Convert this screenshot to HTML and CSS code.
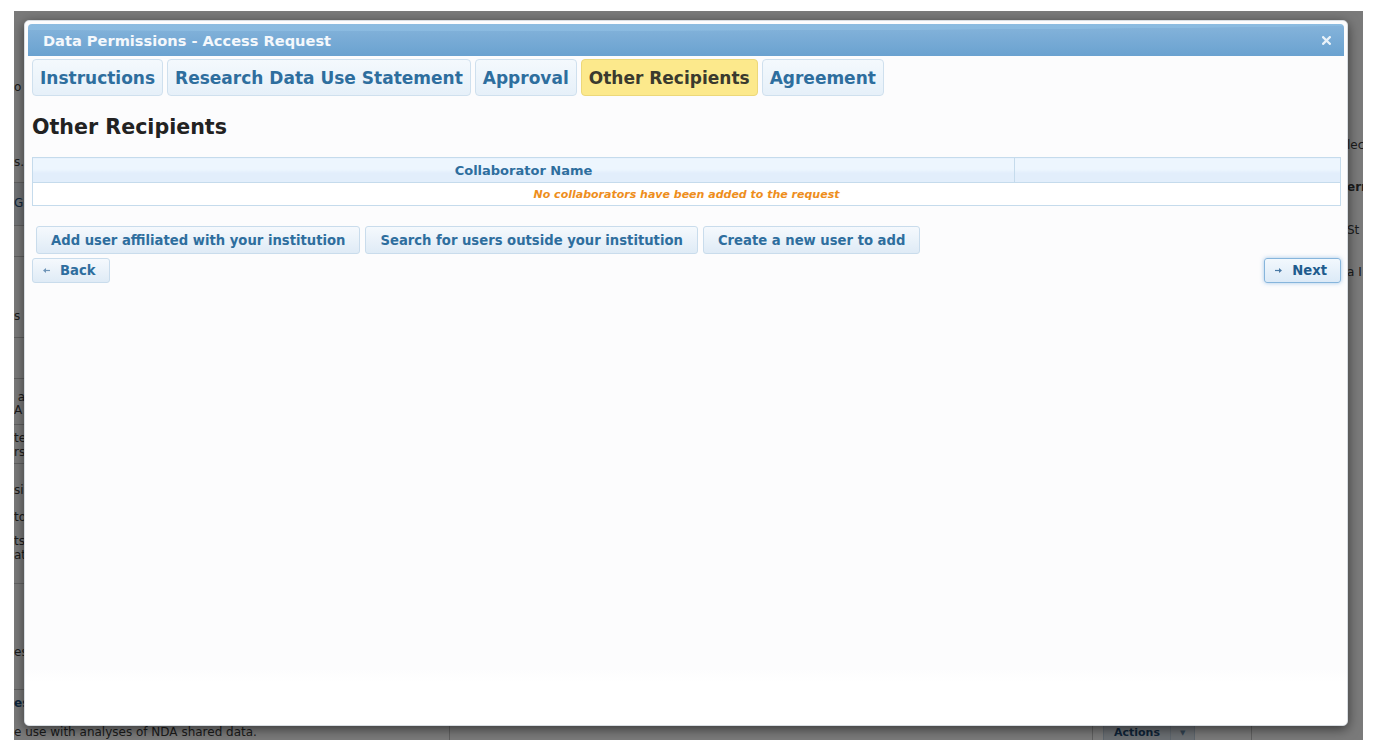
FILE: index.html
```html
<!DOCTYPE html>
<html lang="en">
<head>
<meta charset="utf-8">
<title>Data Permissions - Access Request</title>
<link rel="stylesheet" href="styles.css">
</head>
<body>
<div class="frame">
  <div class="page">
    <div class="page-main">
      <div class="side-left">
        <div class="lrow r1"><span>o</span></div>
        <div class="lrow r2"><span>s.</span></div>
        <div class="lrow r3"><span class="lnk">G</span></div>
        <div class="lrow r4"></div>
        <div class="lrow r5"><span>s</span></div>
        <div class="lrow r6"></div>
        <div class="lrow r7"><div>&nbsp;a</div><div>A</div></div>
        <div class="lrow r8"><div>te</div><div>rsl</div></div>
        <div class="lrow r9"><div class="g1">si</div><div class="g2">to</div><div class="g3">ts</div><div>at</div></div>
        <div class="lrow r10"><span>es</span></div>
        <div class="lrow r11"><span class="lnk strong">es</span></div>
      </div>
      <div class="page-mid"></div>
      <div class="side-right">
        <div class="rt1">lec</div>
        <div class="rt2 strong">ern</div>
        <div class="rt3">St</div>
        <div class="rt4">a I</div>
      </div>
    </div>
    <div class="page-foot">
      <div class="foot-l">e use with analyses of NDA shared data.</div>
      <div class="foot-m"></div>
      <div class="foot-a"><span class="actions"><span class="act-label">Actions</span><span class="act-caret">&#9660;</span></span></div>
      <div class="foot-r"></div>
    </div>
  </div>

  <div class="overlay"></div>

  <div class="dialog">
    <div class="titlebar">
      <span class="title">Data Permissions - Access Request</span>
      <span class="close" aria-label="close">
        <svg width="9" height="9" viewBox="0 0 9 9"><path d="M1.2 1.2 L7.8 7.8 M7.8 1.2 L1.2 7.8" stroke="#eaf2f9" stroke-width="2.3" stroke-linecap="square"/></svg>
      </span>
    </div>
    <div class="content">
      <div class="tabs">
        <span class="tab">Instructions</span>
        <span class="tab">Research Data Use Statement</span>
        <span class="tab">Approval</span>
        <span class="tab active">Other Recipients</span>
        <span class="tab">Agreement</span>
      </div>
      <h2 class="heading">Other Recipients</h2>
      <table class="grid">
        <thead>
          <tr><th class="c-name">Collaborator Name</th><th class="c-act"></th></tr>
        </thead>
        <tbody>
          <tr><td colspan="2" class="empty">No collaborators have been added to the request</td></tr>
        </tbody>
      </table>
      <div class="btnrow">
        <span class="btn">Add user affiliated with your institution</span>
        <span class="btn">Search for users outside your institution</span>
        <span class="btn">Create a new user to add</span>
      </div>
      <div class="navrow">
        <span class="btn nav">
          <svg class="arr" width="7" height="7" viewBox="0 0 7 7"><path d="M2.5 3.5 H7" stroke="#6f95b8" stroke-width="1.2"/><path d="M0 3.5 L3 1 L3 6 Z" fill="#6f95b8"/></svg>
          <span>Back</span>
        </span>
        <span class="btn nav focus">
          <svg class="arr" width="7" height="7" viewBox="0 0 7 7"><path d="M0 3.5 H4.5" stroke="#4a7aa6" stroke-width="1.2"/><path d="M7 3.5 L4 1 L4 6 Z" fill="#4a7aa6"/></svg>
          <span>Next</span>
        </span>
      </div>
    </div>
  </div>
</div>
</body>
</html>
```
FILE: styles.css
```css
html, body {
  margin: 0;
  padding: 0;
  background: #ffffff;
}

body {
  font-family: "DejaVu Sans", Verdana, sans-serif;
}

.frame {
  position: relative;
  margin: 11px 0 0 14px;
  width: 1349px;
  height: 729px;
  overflow: hidden;
}

/* ---------- page underneath the modal ---------- */
.page {
  width: 100%;
  height: 100%;
  background: #ffffff;
  display: flex;
  flex-direction: column;
  font-size: 12px;
  color: #3a3a3a;
}

.page-main {
  height: 713px;
  display: flex;
  flex: none;
}

.side-left {
  width: 435px;
  display: flex;
  flex-direction: column;
}

.lrow {
  box-sizing: border-box;
  border-bottom: 1px solid #c8c8c8;
  line-height: 14px;
  white-space: nowrap;
  overflow: hidden;
}

.r1 { height: 129px; padding-top: 69px; border-bottom-color: transparent; }
.r2 { height: 43px; padding-top: 15px; }
.r3 { height: 43px; padding-top: 13px; background: #eef2f6; }
.r4 { height: 31px; }
.r5 { height: 81px; padding-top: 52px; }
.r6 { height: 41px; }
.r7 { height: 46px; padding-top: 12px; line-height: 13px; }
.r8 { height: 39px; padding-top: 6px; }
.r9 { height: 120px; padding-top: 19px; border-bottom-color: #d0d0d0; }
.r9 .g1 { margin-bottom: 13px; }
.r9 .g2 { margin-bottom: 10px; }
.r10 { height: 106px; padding-top: 61px; }
.r11 { height: 34px; padding-top: 6px; border-bottom: 0; }

.lnk { color: #1f4f7c; }
.strong { font-weight: bold; }

.page-mid {
  flex: 1;
}

.side-right {
  width: 16px;
  flex: none;
  white-space: nowrap;
  line-height: 14px;
  padding-top: 127px;
  font-size: 12px;
}
.rt1 { margin-bottom: 28px; }
.rt2 { margin-bottom: 29px; }
.rt3 { margin-bottom: 28px; }

.page-foot {
  display: flex;
  height: 40px;
  flex: none;
  line-height: 14px;
}

.foot-l {
  width: 435px;
  white-space: nowrap;
  border-right: 1px solid #c8c8c8;
  padding-top: 1px;
}
.foot-m {
  width: 642px;
  border-right: 1px solid #c8c8c8;
}
.foot-a {
  width: 159px;
  border-right: 1px solid #c8c8c8;
  padding: 0 0 0 10px;
  box-sizing: border-box;
}
.foot-r { flex: 1; }

.actions {
  display: inline-flex;
  background: #dfe8f1;
  color: #1f4a74;
  font-weight: bold;
  font-size: 11px;
  line-height: 16px;
  border: 1px solid #c5d5e4;
}
.act-label { padding: 0 10px; border-right: 1px solid #c5d5e4; }
.act-caret { padding: 0 9px; font-size: 7px; color: #6a8aaa; }

.overlay {
  position: absolute;
  inset: 0;
  background: rgba(0, 0, 0, 0.52);
}

/* ---------- modal dialog ---------- */
.dialog {
  position: absolute;
  left: 10px;
  top: 9px;
  width: 1324px;
  height: 706px;
  box-sizing: border-box;
  border: 1px solid #d8dde2;
  border-radius: 5px;
  background: linear-gradient(#fcfcfd 92%, #ffffff 94%);
  padding: 3px;
  display: flex;
  flex-direction: column;
  box-shadow: 0 3px 12px rgba(0, 0, 0, 0.55);
}

.titlebar {
  height: 32px;
  flex: none;
  display: flex;
  align-items: center;
  justify-content: space-between;
  padding: 0 13px 0 15px;
  border-radius: 4px 4px 0 0;
  background:
    radial-gradient(ellipse 140% 60% at 30% -15%, rgba(140, 188, 225, 0.9) 60%, rgba(140, 188, 225, 0) 62%),
    linear-gradient(#86b4db, #6aa2d0);
}

.title {
  color: #f4f8fc;
  font-weight: bold;
  font-size: 14.6px;
}

.close {
  display: flex;
  width: 9px;
  height: 9px;
}

.content {
  padding: 3px 3px 0 4px;
  display: flex;
  flex-direction: column;
}

.tabs {
  display: flex;
  gap: 4px;
}

.tab {
  height: 37px;
  box-sizing: border-box;
  display: flex;
  align-items: center;
  padding: 0 7px;
  border: 1px solid #cfe0ee;
  border-radius: 4px;
  background: linear-gradient(#f4f9fd, #e6f0f9);
  color: #2e6e9e;
  font-weight: bold;
  font-size: 17px;
}

.tab.active {
  background: #fce98c;
  border-color: #ecd87a;
  color: #3a3a2e;
}

.heading {
  margin: 19px 0 18px;
  font-size: 20.6px;
  line-height: 24px;
  color: #222222;
  font-weight: bold;
}

.grid {
  width: 100%;
  border-collapse: collapse;
  border: 1px solid #c5dbec;
}

.grid th {
  height: 24px;
  padding: 0;
  font-size: 13px;
  color: #2e6e9e;
  font-weight: bold;
  background: linear-gradient(#edf6fe 45%, #e2eefb 60%);
  border: 1px solid #c5dbec;
}

.grid th.c-name { width: 981px; }

.grid td.empty {
  height: 22px;
  padding: 0;
  text-align: center;
  background: #ffffff;
  color: #ee8e1c;
  font-size: 11px;
  font-weight: bold;
  font-style: italic;
}

.btnrow {
  display: flex;
  gap: 5px;
  margin: 20px 0 0 4px;
}

.btn {
  display: inline-flex;
  align-items: center;
  box-sizing: border-box;
  height: 28px;
  padding: 0 14px;
  border: 1px solid #c9dcec;
  border-radius: 3px;
  background: linear-gradient(#f5f9fd, #dfebf6);
  color: #2e6e9e;
  font-weight: bold;
  font-size: 13.2px;
  white-space: nowrap;
}

.navrow {
  display: flex;
  justify-content: space-between;
  margin-top: 4px;
}

.btn.nav {
  height: 25px;
  padding: 0 13px 0 10px;
  gap: 10px;
}

.btn.focus {
  border-color: #86b5dc;
  background: linear-gradient(#f2f8fd, #dceaf7);
  box-shadow: 0 0 4px rgba(90, 155, 215, 0.55);
  color: #1f5c8e;
}

.arr {
  flex: none;
}
```
